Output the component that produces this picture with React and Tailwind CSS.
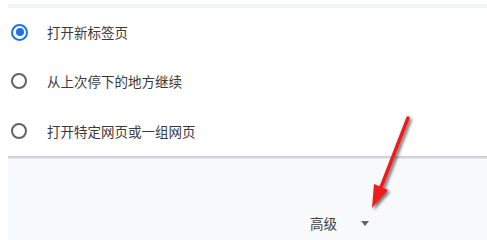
const options = [
  { label: "打开新标签页", checked: true },
  { label: "从上次停下的地方继续", checked: false },
  { label: "打开特定网页或一组网页", checked: false },
]

function Radio({ checked }) {
  if (checked) {
    return (
      <span className="w-[17px] h-[17px] rounded-full border-2 border-[#1a73e8] flex items-center justify-center shrink-0">
        <span className="w-[8px] h-[8px] rounded-full bg-[#1a73e8]" />
      </span>
    )
  }
  return <span className="w-4 h-4 rounded-full border-2 border-[#5f6368] shrink-0" />
}

export default function App() {
  return (
    <div
      className="relative w-[487px] h-[240px] bg-white overflow-hidden flex flex-col"
      style={{ fontFamily: '"Noto Sans CJK SC", "Noto Sans", sans-serif' }}
    >
      <div className="ml-2 flex flex-col flex-1">
        {/* previous section edge */}
        <div className="h-1 mt-1 bg-[#f1f3f4]" />

        {/* Options */}
        <div>
          {options.map((opt, i) => (
            <div key={opt.label} className={`${i === 0 ? "h-[48px]" : "h-[50px]"} flex items-center pl-[3px]`}>
              <Radio checked={opt.checked} />
              <span className={`${opt.checked ? "ml-[19px]" : "ml-5"} text-[13.5px] text-[#3a3a3a]`}>{opt.label}</span>
            </div>
          ))}
        </div>

        {/* Separator */}
        <div className="h-[3px] bg-gradient-to-b from-[#c6c8ca] to-[#e8e9ea]" />

        {/* Advanced */}
        <div className="flex-1 bg-[#f8f9fa] flex items-start pl-[302px] pt-[54px]">
          <span className="text-[13.5px] text-[#3c4043]">高级</span>
          <svg width="8" height="5" viewBox="0 0 8 5" className="ml-6 mt-[8px]">
            <path d="M0 0 L8 0 L4 5 Z" fill="#5f6368" />
          </svg>
        </div>
      </div>

      {/* Red annotation arrow */}
      <svg className="absolute left-0 top-0 pointer-events-none" width="487" height="240">
        <defs>
          <filter id="sh" x="-50%" y="-50%" width="200%" height="200%">
            <feDropShadow dx="2" dy="2" stdDeviation="1.5" floodColor="#000" floodOpacity="0.55" />
          </filter>
        </defs>
        <g filter="url(#sh)">
          <line x1="408" y1="118" x2="380" y2="190" stroke="#ee1c1c" strokeWidth="3.5" strokeLinecap="round" />
          <path d="M372 208 L374 184 L388 190 Z" fill="#ee1c1c" />
        </g>
      </svg>
    </div>
  )
}
